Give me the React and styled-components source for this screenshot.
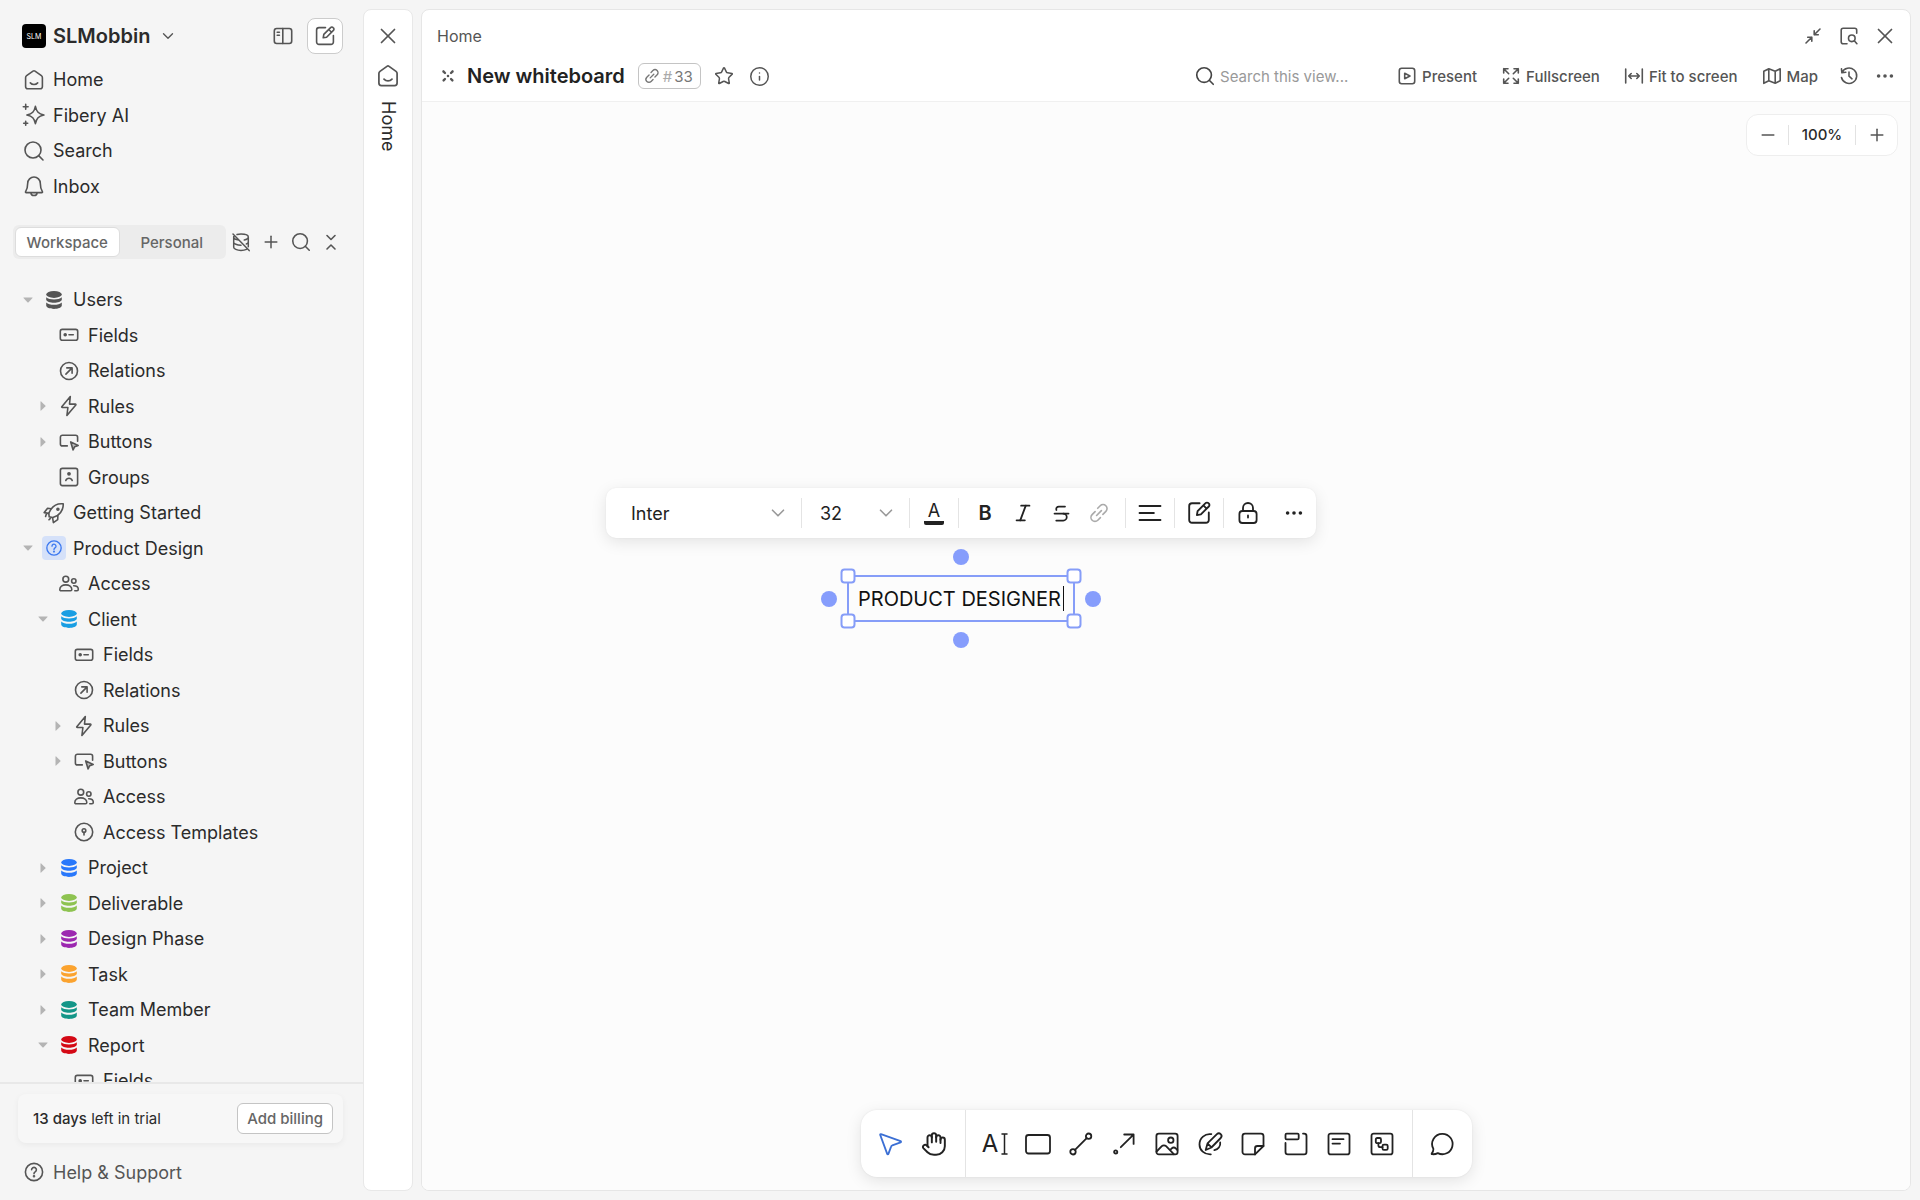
import React from 'react';
import styled, { createGlobalStyle } from 'styled-components';
import { Search, X, Plus, Minus, Star, Info, Hand, Italic, Strikethrough, ChevronDown } from 'lucide-react';

const GlobalStyle = createGlobalStyle`
    * {
        box-sizing: border-box;
    }

    body {
        margin: 0;
        font-family: Inter, 'Liberation Sans', sans-serif;
        color: #2b2b2b;
        background: #f5f5f5;
    }

    button, input, select {
        font-family: inherit;
        color: inherit;
    }

    ul {
        margin: 0;
        padding: 0;
        list-style: none;
    }

    a {
        color: inherit;
        text-decoration: none;
    }
`;

const shapes = {
    home: (
        <>
            <path d="M11 3.1a1.7 1.7 0 0 1 2 0l6.4 4.6a2.4 2.4 0 0 1 1 2v8.8a2.3 2.3 0 0 1-2.3 2.3H5.9a2.3 2.3 0 0 1-2.3-2.3V9.7a2.4 2.4 0 0 1 1-2z" />
            <path d="M8.3 14.9c2 2.2 5.4 2.2 7.4 0" />
        </>
    ),
    sparkle: (
        <>
            <path d="M13.4 3.4c1.1 5.4 3.1 7.4 8.5 8.6-5.4 1.2-7.4 3.2-8.5 8.6-1.1-5.4-3.1-7.4-8.5-8.6 5.4-1.2 7.4-3.2 8.5-8.6z" />
            <path d="M3.7 1.4v4.8M1.3 3.8h4.8M3.7 18.2v4M1.7 20.2h4" />
        </>
    ),
    bell: (
        <>
            <path d="M12 3a6.3 6.3 0 0 0-6.3 6.3c0 4.2-.8 6.3-2.1 8.3-.3.5 0 1 .6 1h15.6c.6 0 .9-.5.6-1-1.3-2-2.1-4.1-2.1-8.3A6.3 6.3 0 0 0 12 3z" />
            <path d="M9 18.9a3 2.6 0 0 0 6 0" />
        </>
    ),
    sidebar: (
        <>
            <rect x="3.3" y="4.5" width="17.4" height="15" rx="2.4" />
            <path d="M11.8 4.5v15M6.2 8.3h2.2M6.2 11.3h2.2" />
        </>
    ),
    edit: (
        <>
            <path d="M12.5 3.6H6A2.4 2.4 0 0 0 3.6 6v12A2.4 2.4 0 0 0 6 20.4h12a2.4 2.4 0 0 0 2.4-2.4v-6.5" />
            <path d="M10.2 13.8l.6-3.4 6.8-6.8a1.7 1.7 0 0 1 2.5 0l.3.3a1.7 1.7 0 0 1 0 2.5l-6.8 6.8zM15.8 5.5l2.7 2.7" />
        </>
    ),
    dbOff: (
        <path d="M8 4.5c1.2-.3 2.5-.4 4-.4 4.100 0 7.300 1.300 7.300 3s-1.700 2.500-4 3M4.700 6.500v10.700c0 1.700 3.200 3.200 7.300 3.200 2.200 0 4.200-.4 5.500-1M19.300 7v9.800M4.700 7.200c.2 1.600 2.500 2.600 5 2.800M4.700 12.200c0 1.600 3.200 3 7.300 3M4 4l16.200 16.600M19.300 12c0 .8-.8 1.500-2 2" />
    ),
    collapse: <path d="M8 5.500l4 4 4-4M8 19l4-4 4 4" />,
    fields: (
        <>
            <rect x="3.3" y="6.4" width="17.4" height="10.8" rx="2" />
            <path d="M12 11.8h4.300" />
            <circle cx="8.2" cy="11.8" r="1" fill="currentColor" />
        </>
    ),
    relations: (
        <>
            <circle cx="12" cy="12" r="8.5" />
            <path d="M8.9 15.100l6-6M9.800 8.900h5.300v5.300" />
        </>
    ),
    rules: <path d="M13.300 2.500l-8.500 10.200a.5.5 0 0 0 .4.800h5.700l-1 8 8.900-10.600a.5.5 0 0 0-.4-.8h-5.900z" />,
    buttons: (
        <>
            <path d="M10.300 15.900H5.400a2 2 0 0 1-2-2V7.300a2 2 0 0 1 2-2h13.200a2 2 0 0 1 2 2v4" />
            <path d="M13.700 11.900l7.500 3.600-3.500 1.200-1.600 3.300z" fill="#bbb" />
        </>
    ),
    groups: (
        <>
            <rect x="3.4" y="3.4" width="17.2" height="17.2" rx="2" />
            <circle cx="12" cy="8.8" r="1.1" fill="currentColor" />
            <path d="M8.8 15.500a3.400 3.400 0 0 1 6.400 0" />
        </>
    ),
    rocket: (
        <>
            <path d="M21.200 2.800c-5.600-.6-9.600 1.600-12.200 5.400l-2.200 4 .4 3.600 3.600.8 4.200-1.800c4.200-3 6.600-6.600 6.200-12z" />
            <path d="M9.200 7.700L5.600 7.200 2.200 11.600l4.400.8M15.900 14.800l-.2 3.800-4.300 3-.8-4.800M4.600 12.300l-1 3.200M8.200 17.600l-1.200 1.200" />
            <circle cx="15.9" cy="8.2" r="1" fill="currentColor" />
        </>
    ),
    question: (
        <>
            <circle cx="12" cy="12" r="8.6" />
            <path d="M9.600 9.800a2.400 2.400 0 1 1 3.600 2.100c-.8.500-1.200.9-1.200 1.800" />
            <circle cx="12" cy="16.3" r=".5" fill="currentColor" />
        </>
    ),
    people: (
        <>
            <circle cx="8.8" cy="7.2" r="2.9" />
            <path d="M2.800 17.500c0-2.800 2.600-4.600 6-4.600s6 1.800 6 4.600c0 .9-.5 1.300-1.300 1.300H4.100c-.8 0-1.300-.4-1.300-1.300z" />
            <circle cx="16.8" cy="9" r="2.2" />
            <path d="M16.700 13.700c2.900 0 4.600 1.500 4.600 3.600 0 .9-.5 1.400-1.300 1.400h-2.200" />
        </>
    ),
    keyhole: (
        <>
            <circle cx="12" cy="12" r="8.7" />
            <circle cx="12" cy="10.6" r="1.8" />
            <path d="M12 12.600v2.400" />
        </>
    ),
    board: (
        <path d="M7.200 7.200l1.500 1.500M16.800 7.200l-1.500 1.500M7.200 16.800l1.500-1.500M16.800 16.800l-1.500-1.500M11.900 12h.2M7 7.100h.1M17 7.100h-.1" strokeWidth="2.6" />
    ),
    link: (
        <path d="M10.700 7.300l2.500-2.500a3.900 3.900 0 0 1 5.700 5.600l-3 3M13.400 16.600l-2.600 2.600a3.900 3.900 0 0 1-5.700-5.600l3-3M9.600 14.500l4.800-4.900" />
    ),
    present: (
        <>
            <rect x="4.3" y="4.3" width="15.4" height="15.4" rx="2.4" />
            <path d="M9.700 9.300v5.400l5.300-2.700z" />
        </>
    ),
    expand: (
        <path d="M4.700 9V4.700H9M4.700 4.700l5 5M15 4.700h4.300V9M19.300 4.700l-5 5M4.700 15v4.300H9M4.700 19.300l5-5M19.300 15v4.300H15M19.300 19.300l-5-5" />
    ),
    fit: <path d="M3.700 5v14M20.300 5v14M6.700 12h10.600M9.200 9.500L6.700 12l2.500 2.500M14.800 9.500l2.500 2.500-2.500 2.500" />,
    map: (
        <path d="M3.800 7.300l5-2.500 6.400 2.500 5-2.500v12l-5 2.500-6.400-2.500-5 2.500zM8.800 4.800v12M15.200 7.300v12" />
    ),
    history: (
        <path d="M5 8.500a7.700 7.700 0 1 1-.5 5M4.500 4.800l.4 4 3.900-.5M12 8v4.200l3 2.600" />
    ),
    dots: (
        <g fill="currentColor" stroke="none">
            <circle cx="5.6" cy="12" r="1.8" />
            <circle cx="12" cy="12" r="1.8" />
            <circle cx="18.4" cy="12" r="1.8" />
        </g>
    ),
    shrink: <path d="M19 5l-5.800 5.800M13.200 6.700v4.100h4.100M5 19l5.800-5.800M6.700 13.200h4.100v4.100" />,
    peek: (
        <>
            <path d="M10 19.700H6.200a2 2 0 0 1-2-2V6.200a2 2 0 0 1 2-2h11.500a2 2 0 0 1 2 2v3" />
            <circle cx="14.8" cy="14.3" r="3.3" />
            <path d="M17.300 16.800l2.600 2.900" />
        </>
    ),
    align: <path d="M1.500 5h21M1.500 12h14.400M1.500 19h21" />,
    lock: (
        <>
            <rect x="3.4" y="10" width="17.2" height="12" rx="3" />
            <path d="M7 10V7a5 5 0 0 1 10 0v3M12 14.500v2" />
        </>
    ),
    pointer: <path d="M2 2.200c-.5-.3-1 .1-.8.700l7 19c.2.600 1 .6 1.200 0l2.700-7.300c.2-.6.6-1 1.200-1.200l8.300-3.100c.6-.2.600-1 0-1.200z" />,
    rectangle: <rect x="0" y="3" width="24" height="18.5" rx="2.5" />,
    line: (
        <>
            <circle cx="4" cy="19.8" r="2.7" />
            <circle cx="19.6" cy="4.2" r="2.7" />
            <path d="M6 17.800L17.700 6.200" />
        </>
    ),
    arrow: (
        <>
            <circle cx="3.7" cy="19.9" r="1.6" />
            <path d="M8.800 15.200L21.500 2.600M12.200 2.500h9.400v9.400" />
        </>
    ),
    image: (
        <>
            <rect x="1.4" y="1.6" width="21.2" height="20.8" rx="2.4" />
            <circle cx="15.8" cy="8.2" r="2.7" />
            <path d="M1.600 19.500l5.200-5.300a3 3 0 0 1 4.300 0l7.700 8M15.500 17.600l1-1a3.200 3.200 0 0 1 4.500 0l1.400 1.400" />
        </>
    ),
    pen: (
        <>
            <path d="M13.300 2.200A10.200 10.200 0 0 0 1.500 12.500c0 5.600 4.800 10.200 11.300 9.900" />
            <path d="M7.700 18l1.800-6.600 9.400-9.200a2.700 2.700 0 0 1 3.800 0 2.700 2.700 0 0 1 0 3.800l-9.300 9.500zM9.500 11.400l4 4" />
            <path d="M22.200 10.500c.5 3.800-2 6.800-5.800 7.700" />
        </>
    ),
    sticky: (
        <>
            <path d="M14 22.400H4a2.500 2.500 0 0 1-2.500-2.500V4.100A2.500 2.500 0 0 1 4 1.600h16a2.500 2.500 0 0 1 2.500 2.500V14z" />
            <path d="M14 22.400v-6a2.400 2.400 0 0 1 2.400-2.400h6.100" />
        </>
    ),
    section: (
        <>
            <rect x="1.5" y="1.6" width="13.2" height="5.8" rx="1.2" />
            <path d="M1.500 11v9a2.400 2.400 0 0 0 2.400 2.400h16.200a2.400 2.400 0 0 0 2.400-2.400V4a2.400 2.400 0 0 0-2.400-2.400H19" />
        </>
    ),
    note: (
        <>
            <rect x="1.5" y="1.6" width="21" height="20.8" rx="2.2" />
            <path d="M5.500 7.200h11M5.500 11.600h7.500" />
        </>
    ),
    diagram: (
        <>
            <rect x="1.5" y="1.6" width="21" height="20.8" rx="2.2" />
            <rect x="5.8" y="6" width="5.2" height="5.2" rx="1.4" />
            <rect x="12.5" y="12.6" width="5.2" height="5.2" rx="1.4" />
            <path d="M8.400 11.200v2a2 2 0 0 0 2 2h2.100" />
        </>
    ),
    comment: <path d="M12.500 1.800a10.200 10.200 0 1 1-4.700 19.300c-1.500.8-3.800 1.300-5.700 1.100-.5 0-.6-.5-.3-.9 1-1.200 1.600-2.800 1.600-4.400A10.200 10.200 0 0 1 12.500 1.800z" />,
};

function Icon({ name, size = 24, stroke = 1.6 }) {
    return (
        <Glyph width={size} height={size} viewBox="0 0 24 24" strokeWidth={stroke} aria-hidden="true">
            {shapes[name]}
        </Glyph>
    );
}

function Database({ color }) {
    return (
        <svg width="24" height="24" viewBox="0 0 24 24" fill={color} aria-hidden="true">
            <ellipse cx="12" cy="6.4" rx="7.8" ry="3.500" />
            <path d="M4.200 9.300c1.600 1.500 4.500 2.200 7.800 2.200s6.200-.7 7.800-2.200v2.400c-.6 1.800-3.900 3-7.800 3s-7.200-1.200-7.800-3z" />
            <path d="M4.200 14.400c1.600 1.700 4.500 2.300 7.800 2.300s6.200-.6 7.800-2.300v3.100c0 1.900-3.500 3.400-7.800 3.400s-7.800-1.500-7.800-3.400z" />
        </svg>
    );
}

const navItems = [
    { icon: 'home', label: 'Home' },
    { icon: 'sparkle', label: 'Fibery AI' },
    { icon: 'search', label: 'Search' },
    { icon: 'bell', label: 'Inbox' },
];

const treeItems = [
    { level: 0, arrow: 'open', db: '#555', label: 'Users' },
    { level: 1, icon: 'fields', label: 'Fields' },
    { level: 1, icon: 'relations', label: 'Relations' },
    { level: 1, arrow: 'closed', icon: 'rules', label: 'Rules' },
    { level: 1, arrow: 'closed', icon: 'buttons', label: 'Buttons' },
    { level: 1, icon: 'groups', label: 'Groups' },
    { level: 0, icon: 'rocket', label: 'Getting Started' },
    { level: 0, arrow: 'open', space: true, label: 'Product Design' },
    { level: 1, icon: 'people', label: 'Access' },
    { level: 1, arrow: 'open', db: '#199ee3', label: 'Client' },
    { level: 2, icon: 'fields', label: 'Fields' },
    { level: 2, icon: 'relations', label: 'Relations' },
    { level: 2, arrow: 'closed', icon: 'rules', label: 'Rules' },
    { level: 2, arrow: 'closed', icon: 'buttons', label: 'Buttons' },
    { level: 2, icon: 'people', label: 'Access' },
    { level: 2, icon: 'keyhole', label: 'Access Templates' },
    { level: 1, arrow: 'closed', db: '#2978fb', label: 'Project' },
    { level: 1, arrow: 'closed', db: '#8ec351', label: 'Deliverable' },
    { level: 1, arrow: 'closed', db: '#9c27b0', label: 'Design Phase' },
    { level: 1, arrow: 'closed', db: '#fba32f', label: 'Task' },
    { level: 1, arrow: 'closed', db: '#139688', label: 'Team Member' },
    { level: 1, arrow: 'open', db: '#d40915', label: 'Report' },
    { level: 2, icon: 'fields', label: 'Fields' },
];

const viewActions = [
    { icon: 'present', label: 'Present' },
    { icon: 'expand', label: 'Fullscreen' },
    { icon: 'fit', label: 'Fit to screen' },
    { icon: 'map', label: 'Map' },
];

const drawTools = ['rectangle', 'line', 'arrow', 'image', 'pen', 'sticky', 'section', 'note', 'diagram'];

function TreeItem({ item }) {
    return (
        <Row>
            <TreeLine $level={item.level}>
                {item.arrow ? (
                    <Arrow type="button" aria-label={`Toggle ${item.label}`}>
                        <svg width="10" height="10" viewBox="0 0 10 10" fill="#b4b4b4" aria-hidden="true">
                            {item.arrow === 'open'
                                ? <path d="M.8 2.500h8.400q.8 0 .3.600L5.600 7.300q-.6.600-1.200 0L.5 3.100q-.5-.6.300-.6z" />
                                : <path d="M2.500.800v8.400q0 .8.600.3L7.300 5.600q.6-.6 0-1.200L3.100.5q-.6-.5-.6.300z" />}
                        </svg>
                    </Arrow>
                ) : <ArrowSpace />}
                <RowLink href="#">
                    {item.db && <Database color={item.db} />}
                    {item.icon && <Icon name={item.icon} />}
                    {item.space && <SpaceBadge><Icon name="question" size={20} /></SpaceBadge>}
                    <span>{item.label}</span>
                </RowLink>
            </TreeLine>
        </Row>
    );
}

function Sidebar() {
    return (
        <Side>
            <SideHeader>
                <WorkspaceButton type="button">
                    <Logo>SLM</Logo>
                    <span>SLMobbin</span>
                    <ChevronDown size={18} strokeWidth={1.8} />
                </WorkspaceButton>
                <IconButton type="button" aria-label="Toggle sidebar"><Icon name="sidebar" /></IconButton>
                <NewButton type="button" aria-label="Create"><Icon name="edit" /></NewButton>
            </SideHeader>
            <NavList>
                {navItems.map((item) => (
                    <Row key={item.label}>
                        <RowLink href="#">
                            {item.icon === 'search' ? <Search size={24} strokeWidth={1.6} /> : <Icon name={item.icon} />}
                            <span>{item.label}</span>
                        </RowLink>
                    </Row>
                ))}
            </NavList>
            <SwitchRow>
                <Switch>
                    <Tab type="button" $active>Workspace</Tab>
                    <Tab type="button">Personal</Tab>
                </Switch>
                <IconButton type="button" aria-label="Hide databases"><Icon name="dbOff" stroke={1.5} /></IconButton>
                <IconButton type="button" aria-label="Add"><Plus size={20} strokeWidth={1.8} /></IconButton>
                <IconButton type="button" aria-label="Search tree"><Search size={22} strokeWidth={1.7} /></IconButton>
                <IconButton type="button" aria-label="Collapse all"><Icon name="collapse" /></IconButton>
            </SwitchRow>
            <Tree>
                {treeItems.map((item, i) => <TreeItem key={i} item={item} />)}
            </Tree>
            <SideFooter>
                <Trial>
                    <span><b>13 days</b> left in trial</span>
                    <BillingButton type="button">Add billing</BillingButton>
                </Trial>
                <HelpLink href="#">
                    <Icon name="question" />
                    <span>Help &amp; Support</span>
                </HelpLink>
            </SideFooter>
        </Side>
    );
}

function TextToolbar() {
    return (
        <FormatBar role="toolbar" aria-label="Text format">
            <SelectWrap $width={195}>
                <select aria-label="Font" defaultValue="Inter">
                    <option>Inter</option>
                </select>
                <ChevronDown size={22} strokeWidth={1.8} />
            </SelectWrap>
            <Divider />
            <SelectWrap $width={107}>
                <select aria-label="Font size" defaultValue="32">
                    <option>32</option>
                </select>
                <ChevronDown size={22} strokeWidth={1.8} />
            </SelectWrap>
            <Divider />
            <FormatButton type="button" aria-label="Text colour"><ColorLetter>A</ColorLetter></FormatButton>
            <Divider />
            <FormatGroup>
                <FormatButton type="button" $narrow aria-label="Bold"><b>B</b></FormatButton>
                <FormatButton type="button" $narrow aria-label="Italic"><Italic size={22} strokeWidth={2} /></FormatButton>
                <FormatButton type="button" $narrow aria-label="Strikethrough"><Strikethrough size={21} strokeWidth={2} /></FormatButton>
                <FormatButton type="button" $narrow $muted aria-label="Link"><Icon name="link" /></FormatButton>
            </FormatGroup>
            <Divider />
            <FormatButton type="button" aria-label="Align"><Icon name="align" stroke={1.8} /></FormatButton>
            <Divider />
            <FormatButton type="button" aria-label="Convert"><Icon name="edit" size={28} /></FormatButton>
            <Divider />
            <FormatButton type="button" aria-label="Lock"><Icon name="lock" stroke={1.8} /></FormatButton>
            <MoreButton type="button" aria-label="More"><Icon name="dots" /></MoreButton>
        </FormatBar>
    );
}

function Board() {
    return (
        <Canvas>
            <Zoom>
                <button type="button" aria-label="Zoom out"><Minus size={20} strokeWidth={1.8} /></button>
                <ZoomValue>100%</ZoomValue>
                <button type="button" aria-label="Zoom in"><Plus size={20} strokeWidth={1.8} /></button>
            </Zoom>
            <TextNode>
                <ToolbarPlace><TextToolbar /></ToolbarPlace>
                <NodeInput aria-label="Text block" defaultValue="PRODUCT DESIGNER" />
                <Caret />
                <Handle $x="-1px" $y="-1px" />
                <Handle $x="calc(100% + 1px)" $y="-1px" />
                <Handle $x="-1px" $y="calc(100% + 1px)" />
                <Handle $x="calc(100% + 1px)" $y="calc(100% + 1px)" />
                <Connector $x="50%" $y="-20px" />
                <Connector $x="50%" $y="calc(100% + 20px)" />
                <Connector $x="-20px" $y="50%" />
                <Connector $x="calc(100% + 20px)" $y="50%" />
            </TextNode>
            <ToolBar role="toolbar" aria-label="Tools">
                <ToolGroup>
                    <Tool type="button" $active aria-label="Select"><Icon name="pointer" stroke={1.8} /></Tool>
                    <Tool type="button" aria-label="Hand"><Hand size={26} strokeWidth={1.8} /></Tool>
                </ToolGroup>
                <ToolGroup>
                    <Tool type="button" aria-label="Text">
                        <TextGlyph>A</TextGlyph>
                        <svg width="8" height="24" viewBox="1 0 8 24" fill="none" stroke="currentColor" strokeWidth="1.5" strokeLinecap="round">
                            <path d="M3 2h5M3 22h5M5.500 2v20" />
                        </svg>
                    </Tool>
                    {drawTools.map((name) => (
                        <Tool type="button" key={name} aria-label={name}><Icon name={name} stroke={1.8} /></Tool>
                    ))}
                </ToolGroup>
                <ToolGroup>
                    <Tool type="button" aria-label="Comment"><Icon name="comment" stroke={1.8} /></Tool>
                </ToolGroup>
            </ToolBar>
        </Canvas>
    );
}

export default function App() {
    return (
        <>
            <GlobalStyle />
            <Layout>
                <Sidebar />
                <Strip>
                    <IconButton type="button" aria-label="Close panel"><X size={26} strokeWidth={1.6} /></IconButton>
                    <StripLink href="#">
                        <Icon name="home" size={26} />
                        <span>Home</span>
                    </StripLink>
                </Strip>
                <Main>
                    <Header>
                        <HeaderRow>
                            <Crumb href="#">Home</Crumb>
                            <HeaderIcons>
                                <IconButton type="button" aria-label="Shrink"><Icon name="shrink" /></IconButton>
                                <IconButton type="button" aria-label="Open as"><Icon name="peek" /></IconButton>
                                <IconButton type="button" aria-label="Close"><X size={26} strokeWidth={1.6} /></IconButton>
                            </HeaderIcons>
                        </HeaderRow>
                        <HeaderRow>
                            <TitleGroup>
                                <Icon name="board" size={22} />
                                <h1>New whiteboard</h1>
                                <IdChip type="button">
                                    <Icon name="link" size={18} stroke={1.8} />
                                    <i>#</i>
                                    <span>33</span>
                                </IdChip>
                                <IconButton type="button" aria-label="Favourite"><Star size={20} strokeWidth={1.8} /></IconButton>
                                <IconButton type="button" aria-label="Info"><Info size={21} strokeWidth={1.7} /></IconButton>
                            </TitleGroup>
                            <SearchField>
                                <Search size={22} strokeWidth={1.8} />
                                <input aria-label="Search this view" placeholder="Search this view..." />
                            </SearchField>
                            <Actions>
                                {viewActions.map((action) => (
                                    <ActionButton type="button" key={action.label}>
                                        <Icon name={action.icon} />
                                        {action.label}
                                    </ActionButton>
                                ))}
                            </Actions>
                            <HeaderIcons>
                                <IconButton type="button" aria-label="History"><Icon name="history" /></IconButton>
                                <IconButton type="button" aria-label="More"><Icon name="dots" /></IconButton>
                            </HeaderIcons>
                        </HeaderRow>
                    </Header>
                    <Board />
                </Main>
            </Layout>
        </>
    );
}

const Glyph = styled.svg`
    display: block;
    flex-shrink: 0;
    overflow: visible;
    fill: none;
    stroke: currentColor;
    stroke-linecap: round;
    stroke-linejoin: round;
`;

const Layout = styled.div`
    display: flex;
    height: 100vh;
    overflow: hidden;
`;

const Side = styled.aside`
    display: flex;
    flex-direction: column;
    flex-shrink: 0;
    width: 363px;
`;

const SideHeader = styled.div`
    display: flex;
    align-items: center;
    gap: 9px;
    padding: 18px 20px 0 22px;
`;

const WorkspaceButton = styled.button`
    display: flex;
    align-items: center;
    gap: 7px;
    margin-right: auto;
    padding: 0;
    border: none;
    background: none;
    font-size: 20px;
    font-weight: 600;

    & svg {
        margin-left: 2px;
        color: #555;
    }
`;

const Logo = styled.span`
    display: flex;
    align-items: center;
    justify-content: center;
    width: 24px;
    height: 24px;
    border-radius: 4px;
    color: #fff;
    background: #000;
    font-size: 7px;
    font-weight: 400;
`;

const IconButton = styled.button`
    display: flex;
    align-items: center;
    justify-content: center;
    width: 30px;
    height: 30px;
    padding: 0;
    border: none;
    color: #555;
    background: none;
    cursor: pointer;
`;

const NewButton = styled(IconButton)`
    width: 36px;
    height: 36px;
    border: 1px solid #ccc;
    border-radius: 8px;
    background: #fff;
`;

const NavList = styled.ul`
    padding: 8px 0 0 22px;
`;

const Row = styled.li`
    flex-shrink: 0;
    height: 35px;

    &:nth-child(even) {
        height: 36px;
    }
`;

const RowLink = styled.a`
    display: flex;
    align-items: center;
    gap: 7px;
    height: 100%;
    font-size: 18px;
    white-space: nowrap;

    & svg {
        flex-shrink: 0;
        color: #555;
    }
`;

const SwitchRow = styled.div`
    display: flex;
    align-items: center;
    padding: 21px 0 23px 13px;
`;

const Switch = styled.div`
    display: flex;
    width: 213px;
    height: 34px;
    padding: 2px;
    border-radius: 6px;
    background: #ececec;
`;

const Tab = styled.button`
    flex: 1;
    padding: 0;
    border: 1px solid ${(props) => (props.$active ? '#ddd' : 'transparent')};
    border-radius: 6px;
    color: #666;
    background: ${(props) => (props.$active ? '#fff' : 'none')};
    font-size: 15px;
    font-weight: 500;
`;

const Tree = styled.ul`
    display: flex;
    flex: 1;
    flex-direction: column;
    min-height: 0;
    overflow: hidden;
`;

const TreeLine = styled.div`
    display: flex;
    align-items: center;
    height: 100%;
    padding-left: ${(props) => 18 + props.$level * 15}px;
`;

const Arrow = styled.button`
    display: flex;
    align-items: center;
    justify-content: center;
    width: 20px;
    height: 20px;
    margin-right: 4px;
    padding: 0;
    border: none;
    background: none;
`;

const ArrowSpace = styled.span`
    width: 24px;
`;

const SpaceBadge = styled.span`
    display: flex;
    align-items: center;
    justify-content: center;
    width: 24px;
    height: 24px;
    border-radius: 4px;
    background: #d5e1f9;

    & svg {
        color: #3b78f0;
    }
`;

const SideFooter = styled.div`
    flex-shrink: 0;
    border-top: 2px solid #e8e8e8;
    padding: 10px 20px 10px 18px;
`;

const Trial = styled.div`
    display: flex;
    align-items: center;
    justify-content: space-between;
    height: 49px;
    padding: 0 10px 0 15px;
    border-radius: 8px;
    background: #f7f7f7;
    box-shadow: 0 2px 6px rgba(0, 0, 0, 0.05);
    font-size: 15px;

    & b {
        font-weight: 500;
    }
`;

const BillingButton = styled.button`
    height: 31px;
    padding: 0 9px;
    border: 1px solid #c4c4c4;
    border-radius: 6px;
    color: #666;
    background: #fff;
    font-size: 15px;
    font-weight: 500;
`;

const HelpLink = styled(RowLink)`
    height: 36px;
    margin: 11px 0 0 4px;
    color: #555;
`;

const Strip = styled.aside`
    display: flex;
    flex-direction: column;
    align-items: center;
    flex-shrink: 0;
    width: 50px;
    margin: 9px 0;
    padding: 11px 0;
    border: 1px solid #e8e8e8;
    border-radius: 8px;
    background: #fff;
`;

const StripLink = styled.a`
    display: flex;
    flex-direction: column;
    align-items: center;
    gap: 12px;
    margin-top: 12px;
    font-size: 18px;

    & span {
        writing-mode: vertical-rl;
    }

    & svg {
        color: #555;
    }
`;

const Main = styled.main`
    display: flex;
    flex: 1;
    flex-direction: column;
    min-width: 0;
    margin: 9px 9px 9px 8px;
    border: 1px solid #e6e6e6;
    border-radius: 8px;
    background: #fff;
    overflow: hidden;
`;

const Header = styled.header`
    padding: 6px 10px 5px 15px;
    border-bottom: 1px solid #f0f0f0;
`;

const HeaderRow = styled.div`
    display: flex;
    align-items: center;
    height: 40px;
`;

const Crumb = styled.a`
    margin-right: auto;
    color: #555;
    font-size: 16px;
`;

const HeaderIcons = styled.div`
    display: flex;
    gap: 6px;
`;

const TitleGroup = styled.div`
    display: flex;
    align-items: center;
    gap: 6px;
    margin-right: auto;
    color: #555;

    & h1 {
        margin: 0 7px 0 2px;
        color: #222;
        font-size: 20px;
        font-weight: 600;
    }
`;

const IdChip = styled.button`
    display: flex;
    align-items: center;
    gap: 2px;
    height: 26px;
    margin-right: 2px;
    padding: 0 7px 0 4px;
    border: 1px solid #c4c4c4;
    border-radius: 6px;
    color: #777;
    background: #fff;
    font-size: 15px;

    & i {
        color: #aaa;
        font-style: normal;
    }
`;

const SearchField = styled.label`
    display: flex;
    align-items: center;
    gap: 4px;
    width: 181px;
    color: #444;

    & input {
        flex: 1;
        min-width: 0;
        padding: 0;
        border: none;
        background: none;
        font-size: 15px;
    }

    & input::placeholder {
        color: #999;
    }
`;

const Actions = styled.div`
    display: flex;
    gap: 22px;
    margin: 0 16px 0 20px;
`;

const ActionButton = styled.button`
    display: flex;
    align-items: center;
    gap: 3px;
    padding: 0;
    border: none;
    color: #555;
    background: none;
    font-size: 15px;
    font-weight: 500;
`;

const Canvas = styled.div`
    position: relative;
    display: flex;
    flex: 1;
    flex-direction: column;
    align-items: center;
    justify-content: space-between;
    padding: 12px 12px 13px;
    background: #fcfcfc;
`;

const Zoom = styled.div`
    display: flex;
    align-items: center;
    align-self: flex-end;
    height: 42px;
    border: 1px solid #eee;
    border-radius: 12px;
    background: #fff;

    & button {
        display: flex;
        align-items: center;
        justify-content: center;
        width: 41px;
        height: 40px;
        padding: 0;
        border: none;
        color: #555;
        background: none;
    }
`;

const ZoomValue = styled.span`
    width: 68px;
    border: solid #e2e2e2;
    border-width: 0 1px;
    font-size: 15px;
    font-weight: 500;
    line-height: 20px;
    text-align: center;
`;

const TextNode = styled.div`
    position: absolute;
    top: 473px;
    left: 425px;
    width: 228px;
    height: 47px;
    border: 2px solid #869df8;
    color: #111;
`;

const ToolbarPlace = styled.div`
    position: absolute;
    bottom: 82px;
    left: 50%;
    transform: translateX(-50%);
`;

const NodeInput = styled.input`
    display: block;
    width: 100%;
    height: 100%;
    padding: 0 0 0 9px;
    border: none;
    background: none;
    font-size: 20px;
`;

const Caret = styled.span`
    position: absolute;
    top: 9px;
    right: 9px;
    width: 1px;
    height: 25px;
    background: #111;
`;

const Handle = styled.span`
    position: absolute;
    left: ${(props) => props.$x};
    top: ${(props) => props.$y};
    width: 15px;
    height: 15px;
    border: 2px solid #869df8;
    border-radius: 4px;
    background: #fff;
    transform: translate(-50%, -50%);
`;

const Connector = styled.span`
    position: absolute;
    left: ${(props) => props.$x};
    top: ${(props) => props.$y};
    width: 16px;
    height: 16px;
    border-radius: 50%;
    background: #869dfc;
    transform: translate(-50%, -50%);
`;

const FormatBar = styled.div`
    display: flex;
    align-items: center;
    height: 50px;
    border-radius: 10px;
    color: #222;
    background: #fff;
    box-shadow: 0 4px 16px rgba(0, 0, 0, 0.1), 0 0 2px rgba(0, 0, 0, 0.06);
`;

const SelectWrap = styled.label`
    display: flex;
    align-items: center;
    width: ${(props) => props.$width}px;
    padding: 0 12px 0 18px;

    &:first-child {
        padding-left: 25px;
    }

    & select {
        flex: 1;
        min-width: 0;
        padding: 0;
        border: none;
        background: none;
        font-size: 18px;
        appearance: none;
    }

    & svg {
        flex-shrink: 0;
        color: #999;
    }
`;

const Divider = styled.span`
    width: 1px;
    height: 30px;
    background: #e4e4e4;
`;

const FormatGroup = styled.div`
    display: flex;
    padding: 0 7px;
`;

const FormatButton = styled.button`
    display: flex;
    align-items: center;
    justify-content: center;
    width: ${(props) => (props.$narrow ? 38 : 48)}px;
    height: 40px;
    padding: 0;
    border: none;
    color: ${(props) => (props.$muted ? '#aaa' : 'inherit')};
    background: none;
    font-size: 20px;

    & b {
        font-weight: 600;
    }
`;

const ColorLetter = styled.span`
    width: 20px;
    border-bottom: 4px solid #222;
    border-radius: 2px;
    font-size: 18px;
    line-height: 20px;
`;

const MoreButton = styled(FormatButton)`
    width: 44px;
`;

const ToolBar = styled.div`
    display: flex;
    height: 67px;
    border-radius: 16px;
    background: #fff;
    box-shadow: 0 4px 16px rgba(0, 0, 0, 0.1), 0 0 2px rgba(0, 0, 0, 0.08);
`;

const ToolGroup = styled.div`
    display: flex;
    padding: 0 9px;

    & + & {
        padding: 0 8px;
        border-left: 1px solid #e4e4e4;
    }
`;

const Tool = styled.button`
    display: flex;
    align-items: center;
    justify-content: center;
    gap: 2px;
    width: 43px;
    padding: 0;
    border: none;
    color: ${(props) => (props.$active ? '#3b6fd4' : '#222')};
    background: none;
`;

const TextGlyph = styled.span`
    font-size: 24px;
    line-height: 24px;
`;
